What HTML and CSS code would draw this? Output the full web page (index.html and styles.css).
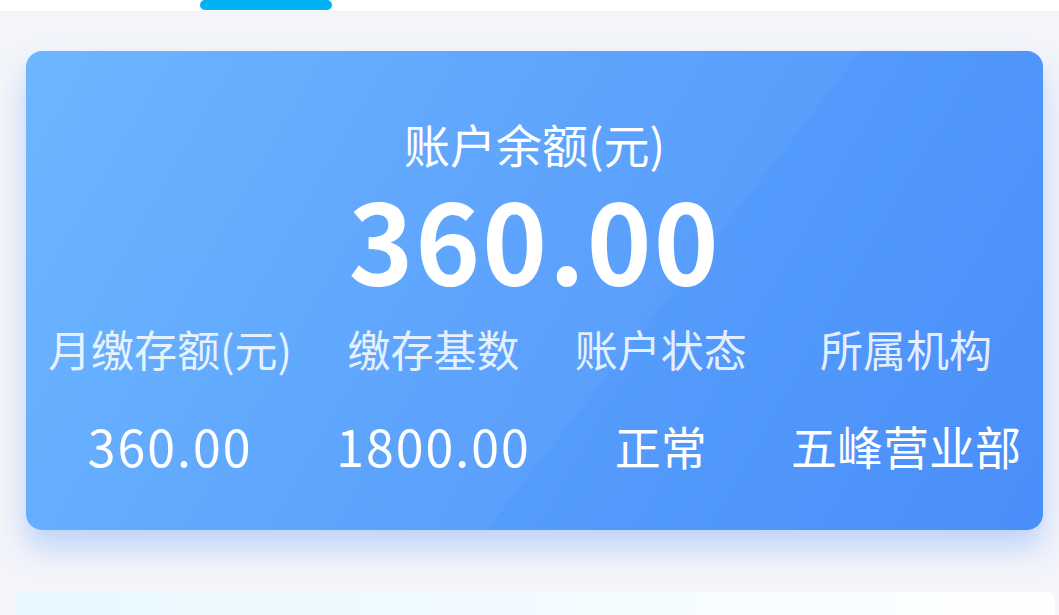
FILE: index.html
```html
<!DOCTYPE html>
<html lang="zh-CN">
<head>
<meta charset="utf-8">
<title>账户余额</title>
<link rel="stylesheet" href="styles.css">
</head>
<body>
<div class="topbar"><span class="pill"></span></div>
<section class="card">
  <div class="title">账户余额(元)</div>
  <div class="amount">360.00</div>
  <div class="stats">
    <div class="stat"><div class="label">月缴存额(元)</div><div class="value num">360.00</div></div>
    <div class="stat"><div class="label">缴存基数</div><div class="value num">1800.00</div></div>
    <div class="stat"><div class="label">账户状态</div><div class="value">正常</div></div>
    <div class="stat"><div class="label">所属机构</div><div class="value">五峰营业部</div></div>
  </div>
</section>
<section class="next-card"></section>
</body>
</html>
```
FILE: styles.css
```css
html, body {
  margin: 0;
  padding: 0;
}
body {
  background: #f4f5fa;
  font-family: "Noto Sans CJK SC", "Noto Sans", sans-serif;
  width: 1059px;
  height: 615px;
  overflow: hidden;
}
.topbar {
  height: 11px;
  background: #ffffff;
  display: flex;
}
.pill {
  display: block;
  margin-left: 200px;
  width: 132px;
  height: 10px;
  border-radius: 5px;
  background: #00b1f4;
}
.card {
  margin: 40px 0 0 26px;
  width: 1017px;
  height: 479px;
  box-sizing: border-box;
  padding-top: 64px;
  border-radius: 16px;
  color: #ffffff;
  background:
    linear-gradient(128deg, rgba(255,255,255,0.035) 0 60%, rgba(255,255,255,0) 60%),
    linear-gradient(120deg, #68b4ff 0%, #58a1fd 45%, #4a8ef9 100%);
  box-shadow: 0 18px 30px rgba(74, 140, 248, 0.32);
  display: flex;
  flex-direction: column;
  align-items: center;
}
.title {
  font-size: 46px;
  line-height: 56px;
  font-weight: 400;
}
.amount {
  margin-top: 11px;
  font-size: 110px;
  line-height: 110px;
  font-weight: 700;
  letter-spacing: 2px;
}
.stats {
  margin-top: 31px;
  align-self: stretch;
  display: flex;
  justify-content: space-around;
}
.stat {
  display: flex;
  flex-direction: column;
  align-items: center;
  gap: 47px;
}
.label {
  font-size: 43px;
  line-height: 50px;
  color: rgba(255, 255, 255, 0.85);
}
.value {
  font-size: 46px;
  line-height: 50px;
}
.value.num {
  font-size: 50px;
  letter-spacing: 2px;
}
.next-card {
  margin: 62px 0 0 16px;
  width: 1039px;
  height: 40px;
  border-radius: 8px 8px 0 0;
  background: linear-gradient(90deg, #e8f8ff 0%, #f2fbff 50%, #ffffff 100%);
}
```
